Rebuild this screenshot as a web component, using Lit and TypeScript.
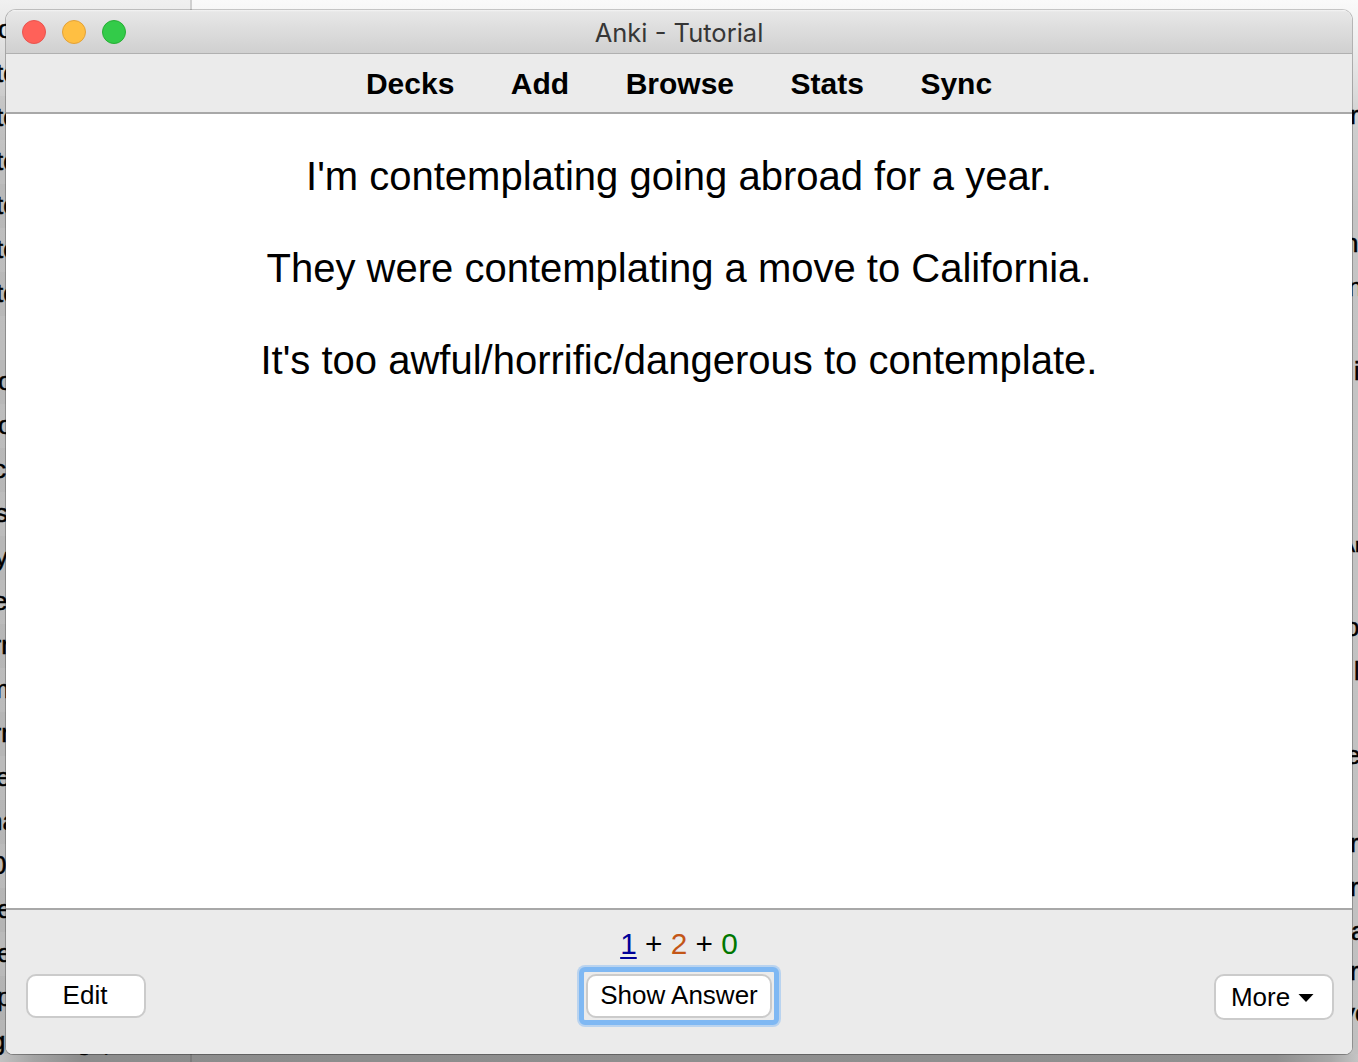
import { LitElement, html, css, svg } from "lit";
import { customElement, property } from "lit/decorators.js";

interface Scrap { t: string; x: number; y: number; s?: number; }

// Text of the window behind, seen only along the edges. y is the baseline.
const leftScraps: Scrap[] = [
  { t: "o", x: -2, y: 38 },
  { t: "te", x: -4, y: 82 }, { t: "te", x: -4, y: 126 }, { t: "te", x: -4, y: 170 },
  { t: "te", x: -4, y: 214 }, { t: "te", x: -4, y: 258 }, { t: "te", x: -4, y: 302 },
  { t: "o", x: -2, y: 390 }, { t: "o", x: -2, y: 434 }, { t: "c", x: -7, y: 478 },
  { t: "s", x: -5, y: 522 }, { t: "y", x: -5, y: 566 }, { t: "e", x: -7, y: 610 },
  { t: "rn", x: -7.5, y: 654 }, { t: "m", x: -12, y: 698 }, { t: "rn", x: -7.5, y: 742 },
  { t: "e", x: -4, y: 786 }, { t: "na", x: -12, y: 830 }, { t: "0", x: -8, y: 874 },
  { t: "e", x: -3, y: 918 }, { t: "e", x: -3, y: 962 }, { t: "p", x: -3, y: 1006 },
  { t: "g", x: -9, y: 1050 }, { t: "g", x: 77, y: 1050 }, { t: ",", x: 103, y: 1051 },
];
const rightScraps: Scrap[] = [
  { t: "r", x: 1350, y: 124 }, { t: "n", x: 1344, y: 252 }, { t: "n", x: 1348, y: 296 },
  { t: "i", x: 1354, y: 380 }, { t: "Ar", x: 1341, y: 552, s: 21 }, { t: "o", x: 1345, y: 636 },
  { t: "l", x: 1354, y: 680 }, { t: "e", x: 1346, y: 764 }, { t: "r", x: 1350, y: 852 },
  { t: "r", x: 1350, y: 896 }, { t: "a", x: 1351, y: 940 }, { t: "r", x: 1350, y: 980 },
  { t: "ye", x: 1342, y: 1022 },
];

@customElement("window-backdrop")
export class WindowBackdrop extends LitElement {
  static styles = css`
    :host { display: block; overflow: hidden; background: #b9b9b9; }
    svg { display: block; width: 100%; height: 100%; font-family: "Liberation Sans", Arial, sans-serif; }
    text { stroke: #000; stroke-width: 0.5px; }
  `;
  render() {
    return html`<svg viewBox="0 0 1358 1062">
      <defs>
        <linearGradient id="side" x1="0" y1="0" x2="0" y2="1062" gradientUnits="userSpaceOnUse">
          <stop offset="0" stop-color="#f0f0f0"/><stop offset=".03" stop-color="#e6e6e6"/>
          <stop offset=".09" stop-color="#cccccc"/><stop offset=".16" stop-color="#bebebe"/>
          <stop offset=".9" stop-color="#bababa"/><stop offset="1" stop-color="#b4b4b4"/>
        </linearGradient>
        <linearGradient id="rside" x1="0" y1="0" x2="0" y2="1062" gradientUnits="userSpaceOnUse">
          <stop offset="0" stop-color="#fafafa"/><stop offset=".04" stop-color="#eeeeee"/>
          <stop offset=".12" stop-color="#cecece"/><stop offset=".2" stop-color="#c5c5c5"/>
          <stop offset="1" stop-color="#c0c0c0"/>
        </linearGradient>
        <linearGradient id="floor" x1="0" x2="1358" y1="0" y2="0" gradientUnits="userSpaceOnUse">
          <stop offset="0" stop-color="#c2c2c2"/><stop offset=".025" stop-color="#a4a4a4"/>
          <stop offset=".06" stop-color="#8c8c8c"/><stop offset=".94" stop-color="#909090"/>
          <stop offset=".98" stop-color="#a8a8a8"/><stop offset="1" stop-color="#c4c4c4"/>
        </linearGradient>
      </defs>
      <rect width="192" height="1062" fill="url(#side)"/>
      <rect x="192" width="1166" height="1062" fill="url(#rside)"/>
      ${Array.from({ length: 12 }, (_, i) => svg`<rect y=${96 + i * 88} width="6" height="44" fill="#000" opacity=".025"/>`)}
      <rect y="1054" width="1358" height="8" fill="url(#floor)"/>
      <rect x="190" width="2" height="10" fill="#d0d0d0"/>
      <rect x="190" y="1054" width="2" height="8" fill="#7c7c7c"/>
      ${[...leftScraps, ...rightScraps].map(
        (g) => svg`<text x=${g.x} y=${g.y} font-size=${g.s ?? 26}>${g.t}</text>`
      )}
    </svg>`;
  }
}

@customElement("title-bar")
export class TitleBar extends LitElement {
  @property() heading = "";
  static styles = css`
    :host { display: grid; grid-template-columns: 1fr auto 1fr; align-items: center; height: 44px;
      box-sizing: border-box; padding: 0 16px; border-bottom: 1px solid #b0b0b0;
      background: linear-gradient(#f4f4f4 0, #e7e7e7 2px, #d0d0d0 100%); }
    .lights { display: flex; gap: 16px; }
    .light { width: 24px; height: 24px; border-radius: 50%; box-sizing: border-box; border: 1px solid; }
    .close { background: #ff6159; border-color: #e8544f; }
    .minimize { background: #ffbf42; border-color: #e2a139; }
    .zoom { background: #33cb49; border-color: #27ae35; }
    .heading { font: 25.5px/42px Inter, Roboto, sans-serif; color: #363636; white-space: nowrap; padding-top: 2px; }
  `;
  render() {
    return html`<div class="lights">
        <span class="light close"></span><span class="light minimize"></span><span class="light zoom"></span>
      </div>
      <span class="heading">${this.heading}</span>`;
  }
}

@customElement("app-root")
export class AppRoot extends LitElement {
  static styles = css`
    :host { display: grid; width: 1358px; height: 1062px; overflow: hidden; color: #000;
      font-family: "Liberation Sans", Arial, sans-serif; }
    window-backdrop, .window { grid-area: 1 / 1; }
    .window { margin: 10px 6px 8px; display: flex; flex-direction: column; overflow: hidden;
      border-radius: 10px 10px 7px 7px; background: #fff; min-width: 0; }
    .frame { grid-area: 1 / 1; margin: 9px 5px 7px; border: 1px solid rgba(0, 0, 0, 0.25);
      border-top-color: rgba(0, 0, 0, 0.2); border-bottom-color: rgba(0, 0, 0, 0.3);
      border-radius: 11px 11px 8px 8px; pointer-events: none; }
    title-bar { flex: none; }
    nav { flex: none; display: flex; justify-content: center; gap: 56.5px; height: 58px;
      background: #ebebeb; border-bottom: 2px solid #a8a8a8; font-size: 30px; line-height: 59px; font-weight: 700; }
    main { flex: 1; padding-top: 39px; text-align: center; font-size: 40px; line-height: 46px; }
    .sentence { margin: 0 0 46px; white-space: nowrap; }
    footer { flex: none; box-sizing: border-box; height: 146px; border-top: 2px solid #a8a8a8; background: #ebebeb;
      display: grid; grid-template-columns: 120px 1fr 120px; padding: 0 18px 0 20px; }
    .center { display: flex; flex-direction: column; align-items: center; padding: 17px 2px 0 0; }
    .counts { font-size: 29.8px; line-height: 34px; height: 34px; white-space: pre; }
    .new { color: #000099; text-decoration: underline; text-decoration-thickness: 2px; text-underline-offset: 3px; }
    .learning { color: #c35617; }
    .due { color: #007700; }
    .button { box-sizing: border-box; height: 44px; border: 2px solid #cbcbcb; border-radius: 10px; background: #fff;
      display: flex; justify-content: center; align-items: center; padding: 0 0 2px; color: #000;
      font: 26px/38px "Liberation Sans", Arial, sans-serif; white-space: nowrap; }
    .edit { margin-top: 64px; padding-right: 2px; }
    .more { margin-top: 64px; height: 46px; gap: 8px; padding: 0 3px 1px 0; }
    .ring { margin-top: 6px; padding: 2px; background: #ebebeb; border: 5px solid #7fb8f3; border-radius: 6px;
      box-shadow: 0 0 0 2px #b9d3ef; }
    .answer { width: 186px; }
    .caret { width: 16px; height: 8px; margin-top: 3px; }
  `;
  private menu = ["Decks", "Add", "Browse", "Stats", "Sync"];
  private sentences = [
    "I'm contemplating going abroad for a year.",
    "They were contemplating a move to California.",
    "It's too awful/horrific/dangerous to contemplate.",
  ];
  render() {
    return html`<window-backdrop></window-backdrop>
      <div class="frame"></div>
      <div class="window">
        <title-bar heading="Anki - Tutorial"></title-bar>
        <nav>${this.menu.map((m) => html`<span>${m}</span>`)}</nav>
        <main>${this.sentences.map((s) => html`<p class="sentence">${s}</p>`)}</main>
        <footer>
          <button class="button edit">Edit</button>
          <div class="center">
            <div class="counts"><span class="new">1</span> + <span class="learning">2</span> + <span class="due">0</span></div>
            <div class="ring"><button class="button answer">Show Answer</button></div>
          </div>
          <button class="button more"><span>More</span><svg class="caret" viewBox="0 0 16 8"><path d="M.5 0h15L8 8z"/></svg></button>
        </footer>
      </div>`;
  }
}
